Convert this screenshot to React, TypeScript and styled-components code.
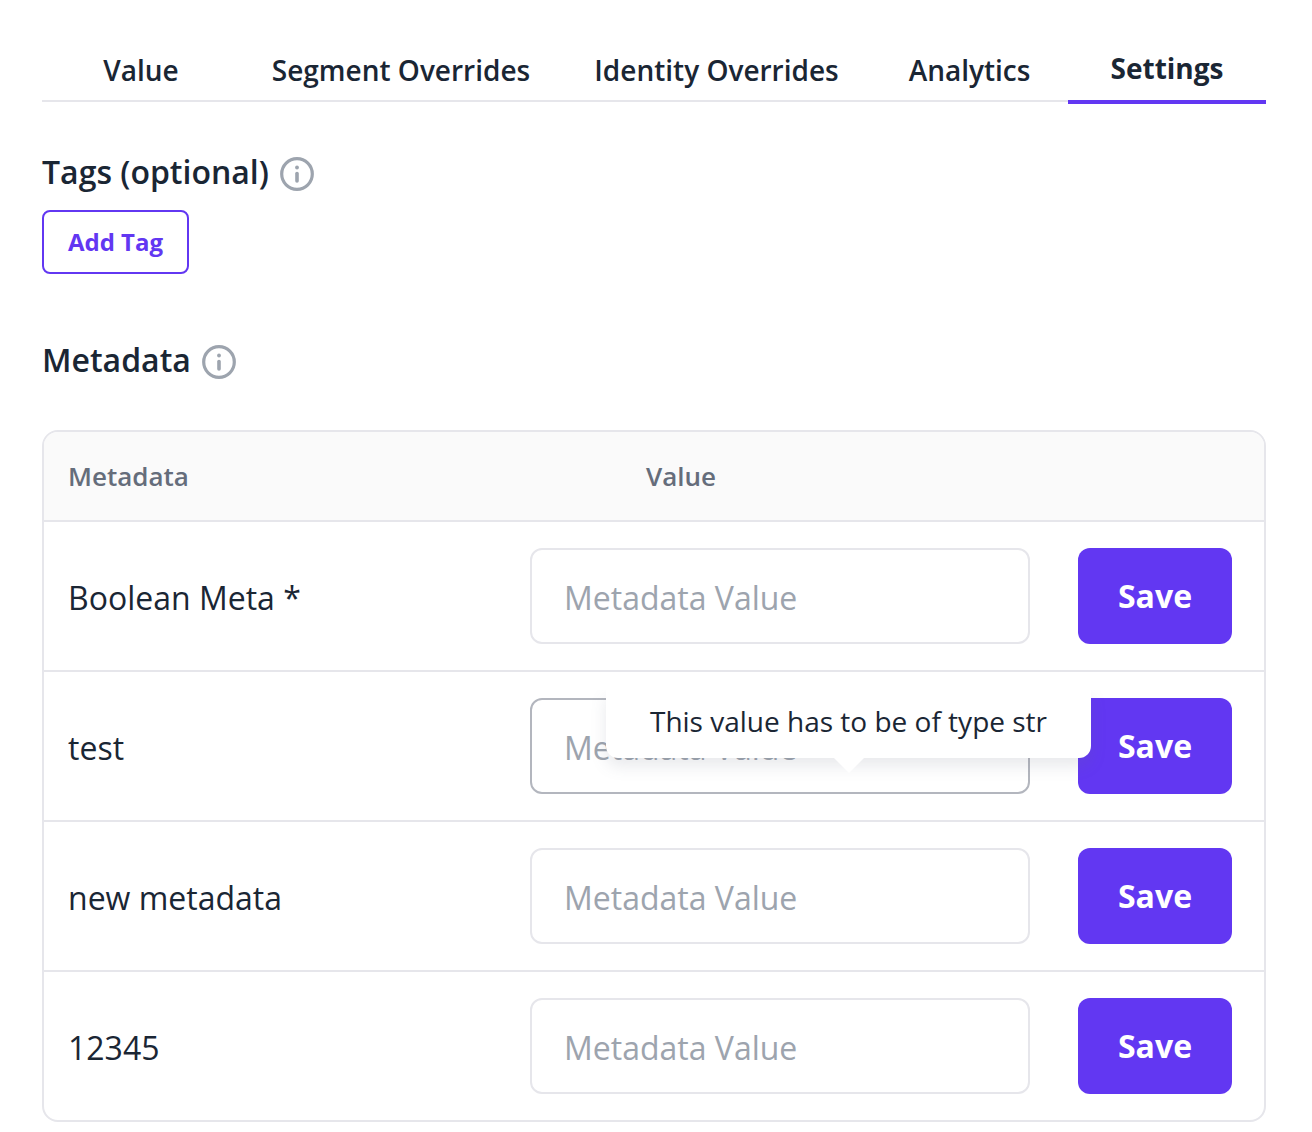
import React from 'react';
import styled, { createGlobalStyle } from 'styled-components';

const Global = createGlobalStyle`
  * { box-sizing: border-box; }
  body { margin: 0; background: #fff; color: #1a2634; font-family: "Open Sans", sans-serif; }
`;
const Page = styled.main`
  height: 1132px;
  overflow: hidden;
  padding: 36px 46px 0 42px;
`;
const Tabs = styled.nav`
  display: grid;
  grid-template-columns: 197px 323px 308px 198px 198px;
  height: 68px;
`;
const Tab = styled.button<{ $active?: boolean }>`
  height: ${p => (p.$active ? 68 : 66)}px;
  padding: ${p => (p.$active ? '0' : '4px 0 0 1px')};
  border: 0;
  border-bottom: ${p => (p.$active ? '4px solid #6237f2' : '2px solid #e6e6eb')};
  background: none;
  color: #1a2634;
  font: ${p => (p.$active ? 700 : 600)} 28px/40px "Open Sans", sans-serif;
  white-space: nowrap;
`;
const Heading = styled.h2`
  display: flex;
  align-items: center;
  gap: 11px;
  height: 44px;
  margin: 0;
  font-size: 32px;
  font-weight: 600;
  line-height: 44px;
`;
const Tags = styled.section`
  padding-top: 46px;
`;
const Metadata = styled.section`
  padding-top: 64px;
`;
const Info = styled.svg`
  flex: none;
  margin-top: 4px;
`;
const AddTag = styled.button`
  display: block;
  width: 147px;
  height: 64px;
  margin-top: 16px;
  padding: 0;
  border: 2px solid #6237f2;
  border-radius: 8px;
  background: #fff;
  color: #6237f2;
  font: 700 24px/32px "Open Sans", sans-serif;
`;
const Table = styled.div`
  height: 692px;
  margin-top: 48px;
  border: 2px solid #e6e6eb;
  border-radius: 16px;
  overflow: hidden;
`;
const Header = styled.div`
  display: grid;
  grid-template-columns: 578px 1fr;
  align-items: center;
  height: 88px;
  padding-left: 24px;
  background: #fafafa;
  color: #656d7b;
  font-size: 26px;
  font-weight: 600;
`;
const Row = styled.div`
  display: grid;
  grid-template-columns: 462px 500px 202px;
  align-items: center;
  height: 150px;
  padding-left: 24px;
  border-top: 2px solid #e6e6eb;
  font-size: 32px;
`;
const Field = styled.div`
  position: relative;
  height: 96px;
`;
const Name = styled.span`
  padding-top: 2px;
`;
const Input = styled.input<{ $focused?: boolean }>`
  display: block;
  width: 500px;
  height: 96px;
  padding: 2px 32px 0;
  border: 2px solid ${p => (p.$focused ? '#b3b6be' : '#e6e6eb')};
  border-radius: 12px;
  outline: 0;
  background: #fff;
  font: 400 32px/44px "Open Sans", sans-serif;
  &::placeholder { color: #9da4ae; opacity: 1; }
`;
const Save = styled.button`
  width: 154px;
  height: 96px;
  margin-left: 48px;
  padding: 0;
  border: 0;
  border-radius: 12px;
  background: #6237f2;
  color: #fff;
  font: 700 32px/44px "Open Sans", sans-serif;
`;
const Tooltip = styled.div`
  position: absolute;
  z-index: 1;
  top: -8px;
  left: 76px;
  width: 485px;
  height: 68px;
  padding-top: 8px;
  border-radius: 0 0 12px 12px;
  background: #fff;
  font-size: 28px;
  line-height: 46px;
  text-align: center;
  white-space: nowrap;
  clip-path: inset(0 -30px -40px -30px);
  box-shadow: 0 8px 16px rgba(100, 105, 130, 0.15);
  &::after {
    content: '';
    position: absolute;
    top: 67px;
    left: 227px;
    border: 16px solid transparent;
    border-top-color: #fff;
    border-bottom: 0;
  }
`;

function InfoIcon() {
  return (
    <Info width="34" height="34" viewBox="0 0 34 34" fill="none">
      <circle cx="17" cy="17" r="15.3" stroke="#9da4ae" strokeWidth="3.2" />
      <path d="M17 16.5v7.5" stroke="#9da4ae" strokeWidth="3.6" strokeLinecap="round" />
      <circle cx="17" cy="10.5" r="1.9" fill="#9da4ae" />
    </Info>
  );
}

const tabs = ['Value', 'Segment Overrides', 'Identity Overrides', 'Analytics', 'Settings'];
const fields = ['Boolean Meta *', 'test', 'new metadata', '12345'];

export default function App() {
  return (
    <Page>
      <Global />
      <Tabs>
        {tabs.map(t => (
          <Tab key={t} $active={t === 'Settings'}>{t}</Tab>
        ))}
      </Tabs>
      <Tags>
        <Heading>Tags (optional) <InfoIcon /></Heading>
        <AddTag>Add Tag</AddTag>
      </Tags>
      <Metadata>
        <Heading>Metadata <InfoIcon /></Heading>
        <Table>
          <Header><span>Metadata</span><span>Value</span></Header>
          {fields.map(name => (
            <Row key={name}>
              <Name>{name}</Name>
              <Field>
                <Input placeholder="Metadata Value" $focused={name === 'test'} />
                {name === 'test' && <Tooltip role="tooltip">This value has to be of type str</Tooltip>}
              </Field>
              <Save>Save</Save>
            </Row>
          ))}
        </Table>
      </Metadata>
    </Page>
  );
}
